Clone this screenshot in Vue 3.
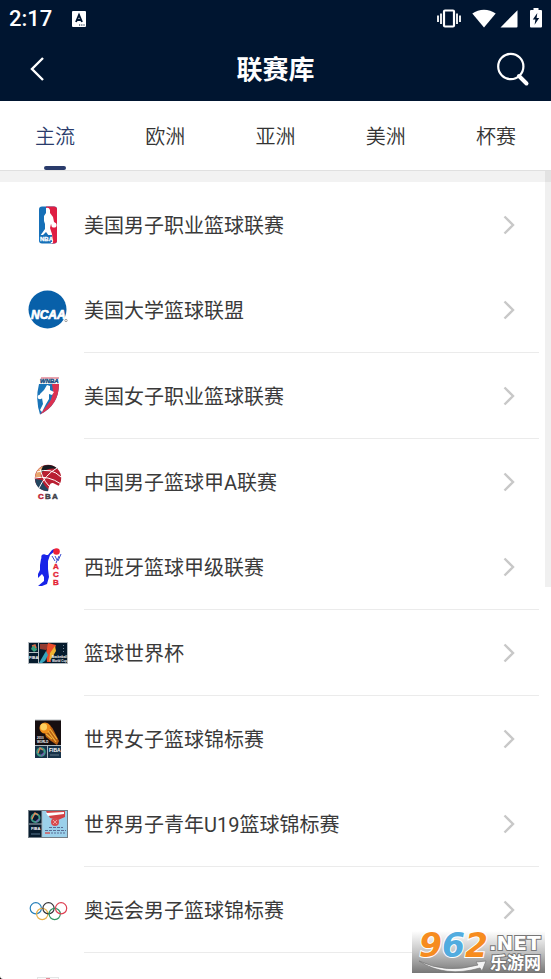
<script setup>
import { ref } from "vue";

const tabs = ["主流", "欧洲", "亚洲", "美洲", "杯赛"];
const activeTab = ref("主流");

// Leagues are shown in groups, the divider is left out at the end of some rows
const leagues = [
  { id: "nba", name: "美国男子职业篮球联赛", divider: false },
  { id: "ncaa", name: "美国大学篮球联盟", divider: true },
  { id: "wnba", name: "美国女子职业篮球联赛", divider: true },
  { id: "cba", name: "中国男子篮球甲A联赛", divider: false },
  { id: "acb", name: "西班牙篮球甲级联赛", divider: true },
  { id: "worldcup", name: "篮球世界杯", divider: true },
  { id: "women", name: "世界女子篮球锦标赛", divider: false },
  { id: "u19", name: "世界男子青年U19篮球锦标赛", divider: true },
  { id: "olympic", name: "奥运会男子篮球锦标赛", divider: true },
  { id: "next", name: "", divider: false },
];
</script>

<template>
  <div class="page">
    <header class="header">
      <div class="status-bar">
        <span class="time">2:17</span>
        <svg class="input-icon" width="14" height="16" viewBox="0 0 14 16">
          <rect width="14" height="16" rx="1" fill="#fff" />
          <path d="M4 11 L7 4 L10 11 M5 9 H9" fill="none" stroke="#001530" stroke-width="1.9" />
          <path d="M7 14 H8.2 M9.2 14 H10.4 M11.4 14 H12.6" stroke="#001530" stroke-width="1.2" />
        </svg>
        <div class="status-icons">
          <svg width="26" height="20" viewBox="0 0 26 20">
            <rect x="8" y="1.5" width="10" height="16" rx="1" fill="none" stroke="#fff" stroke-width="2.2" />
            <path d="M5 4.5 V15 M21 4.5 V15" stroke="#fff" stroke-width="1.8" />
            <path d="M2 6.5 V13 M24 6.5 V13" stroke="#fff" stroke-width="1.8" />
          </svg>
          <svg class="wifi" width="24" height="20" viewBox="0 0 24 20">
            <path d="M12 18.5 L0.3 4.6 C7 -0.7 17 -0.7 23.7 4.6 Z" fill="#fff" />
          </svg>
          <svg class="signal" width="18" height="20" viewBox="0 0 18 20">
            <path d="M0.5 18.5 L17.5 1.2 V17.5 Q17.5 18.5 16.5 18.5 Z" fill="#fff" />
          </svg>
          <svg class="battery" width="12" height="20" viewBox="0 0 12 20">
            <path d="M3.5 0 H8.5 V2 H11 Q12 2 12 3 V18.5 Q12 19.5 11 19.5 H1 Q0 19.5 0 18.5 V3 Q0 2 1 2 H3.5 Z" fill="#fff" />
            <path d="M7.3 5 L2.8 11.6 H5.4 L4.6 16.8 L9.2 10 H6.6 Z" fill="#001530" />
          </svg>
        </div>
      </div>
      <div class="nav-bar">
        <button type="button" class="nav-button" aria-label="返回">
          <svg width="16" height="26" viewBox="0 0 16 26">
            <path d="M14 2 L3 13 L14 24" fill="none" stroke="#fff" stroke-width="2.4" />
          </svg>
        </button>
        <h1 class="title">联赛库</h1>
        <button type="button" class="nav-button" aria-label="搜索">
          <svg width="34" height="36" viewBox="0 0 34 36">
            <circle cx="13.8" cy="15.5" r="12.6" fill="none" stroke="#fff" stroke-width="2.2" />
            <path d="M22 25 L29.5 32.5" stroke="#fff" stroke-width="4" stroke-linecap="round" />
          </svg>
        </button>
      </div>
    </header>

    <nav class="tabs">
      <button
        v-for="tab in tabs"
        :key="tab"
        type="button"
        class="tab"
        :class="{ active: tab === activeTab }"
        @click="activeTab = tab"
      >
        {{ tab }}
      </button>
    </nav>

    <main class="list">
      <a v-for="league in leagues" :key="league.id" href="#" class="league">
        <span class="logo">
          <svg v-if="league.id === 'nba'" width="40" height="40" viewBox="0 0 40 40">
            <rect x="11" y="1.5" width="18" height="37" rx="3" fill="#1670b8" />
            <path d="M18 1.5 H26 Q29 1.5 29 4.5 V35.5 Q29 38.5 26 38.5 H24 Z" fill="#df1e43" />
            <path d="M18 3 Q21 2 22 5 L22 8 L25 12 L26 17 L28 19 L26 22 L23 19 L22 23 L24 29 L25 38 L23 38 L21 31 L18 27 L14 31 L12 33 L12 31 L17 24 L17 19 L16 16 L16 11 L18 8 Z" fill="#fff" />
            <circle cx="26" cy="20" r="2.6" fill="#fff" />
            <path d="M12 30 H24 V37 H12 Z" fill="#1670b8" />
            <text x="12" y="36" class="mark" font-size="6" fill="#fff" stroke="#fff" stroke-width="0.3">NBA</text>
          </svg>
          <svg v-else-if="league.id === 'ncaa'" width="40" height="40" viewBox="0 0 40 40">
            <circle cx="19.5" cy="19.5" r="19" fill="#0860a9" />
            <text x="3" y="28.5" class="mark italic" font-size="12" fill="#fff" stroke="#fff" stroke-width="0.7">NCAA</text>
            <circle cx="38" cy="30.5" r="1.2" fill="none" stroke="#666" stroke-width="0.6" />
          </svg>
          <svg v-else-if="league.id === 'wnba'" width="40" height="40" viewBox="0 0 40 40">
            <path d="M13 2 H31" stroke="#d84a60" stroke-width="1" />
            <text x="12" y="7" class="mark italic" font-size="6" fill="#174d80" stroke="#174d80" stroke-width="0.4">WNBA</text>
            <path d="M11 8 H31 Q31 29 12 38.5 Q7 23 11 8 Z" fill="#1974b8" />
            <path d="M24 8 H31 Q31 29 12 38.5 L20 28 Q27 20 24 8 Z" fill="#dc3150" />
            <path d="M19 9 L22 10 L22 14 L26 16 L24 19 L21 18 L21 23 L18 28 L14 36 L12 34 L15 28 L14 22 L11 22 L12 18 L16 14 Z" fill="#fff" />
            <circle cx="12" cy="21" r="2.3" fill="#fff" />
          </svg>
          <svg v-else-if="league.id === 'cba'" width="40" height="40" viewBox="0 0 40 40">
            <circle cx="20" cy="16" r="13.2" fill="#b91f32" />
            <path d="M13 5 Q22 0 30 7 Q20 5 13 11 Z" fill="#171b21" />
            <path d="M7 15 Q8 7 15 4 Q12 10 13 16 Z" fill="#e8a66e" />
            <path d="M7 17 L14 18 Q16 25 23 29 Q8 30 7 17 Z" fill="#244660" />
            <path d="M7 16 Q20 13 33 22 M12 7 Q16 22 26 28 M9 10 Q23 5 33 15 M29 6 Q17 13 11 26" fill="none" stroke="#fff" stroke-width="1" />
            <path d="M20 30 Q21 20 25 21 L33 25 L29 31 Z" fill="#fff" />
            <g class="mark" font-size="8" stroke-width="0.5">
              <text x="10" y="37" fill="#bd2536" stroke="#bd2536">C</text>
              <text x="17" y="37" fill="#41434a" stroke="#41434a">B</text>
              <text x="24" y="37" fill="#41434a" stroke="#41434a">A</text>
            </g>
          </svg>
          <svg v-else-if="league.id === 'acb'" width="40" height="40" viewBox="0 0 40 40">
            <path d="M24 3 L26 2 L27 4 L22 8 L20 14 L20 22 L21 30 L19 37 L14 39 L10 39 L16 34 L16 30 L14 27 L10 31 L10 27 L12 23 L12 18 L13 12 L16 8 L20 8 Z" fill="#1824e8" />
            <circle cx="16" cy="10" r="2.7" fill="#1824e8" />
            <circle cx="28.5" cy="4.5" r="3.3" fill="#ee2338" />
            <path d="M24 9 L27 14 M27 9 L29 13 M31 9 L28 16 M33 7 L30 14" stroke="#384cce" stroke-width="1" />
            <g class="mark" font-size="8" fill="#e42334" stroke="#e42334" stroke-width="0.4">
              <text x="25" y="22">A</text>
              <text x="25" y="30">C</text>
              <text x="25" y="38">B</text>
            </g>
          </svg>
          <svg v-else-if="league.id === 'worldcup'" width="40" height="40" viewBox="0 0 40 40">
            <rect x="0.5" y="9.5" width="39" height="21" fill="#061b2d" stroke="#b5bbc0" />
            <path d="M10.5 10 V30 M1 19.5 H10" stroke="#b5bbc0" stroke-width="1" />
            <path d="M3 16 L5 12 L8 13 L9 17 L6 19 Z" fill="#399f7c" />
            <path d="M4 13 L7 12 L8 15" fill="none" stroke="#d46a46" stroke-width="1.4" />
            <text x="1" y="26" class="mark" font-size="4" fill="#fff">FIBA</text>
            <path d="M12 11 H22 L18 17 L12 16 Z" fill="#933a31" />
            <path d="M20 10 L28 12 L26 18 L22 20 L23 29 L19 29 L18 20 Z" fill="#e94b2b" />
            <path d="M27 13 L28 18 L25 23 L21 29 L22 20 Z" fill="#efb331" />
            <path d="M18 18 L20 22 L17 28 L14 30 L11 30 Z" fill="#36a4bd" />
            <text x="24" y="25" class="mark" font-size="3" fill="#fff">Basketball</text>
            <text x="24" y="29" class="mark" font-size="3" fill="#fff">World Cup</text>
            <path d="M35.5 12 V21" stroke="#789" stroke-width="1" stroke-dasharray="1 2" />
          </svg>
          <svg v-else-if="league.id === 'women'" width="40" height="40" viewBox="0 0 40 40">
            <rect x="7" y="1" width="26" height="38" fill="#160e10" />
            <path d="M7 1 H33" stroke="#b6bcc0" stroke-width="1" />
            <path d="M14 5 Q21 2 26 12 L31 22 L29 26 L23 22 L18 18 Z" fill="#b85e13" />
            <circle cx="17" cy="9" r="5.5" fill="#ef8c19" />
            <circle cx="15.7" cy="8" r="3.4" fill="#ffd05d" />
            <path d="M20 12 L28 23 M18 15 L24 20 M22 10 L29 20" stroke="#f2b339" stroke-width="1.2" />
            <text x="9" y="20" class="mark" font-size="3" fill="#fff">2010</text>
            <text x="9" y="24" class="mark" font-size="3" fill="#fff">WORLD</text>
            <rect x="7" y="26" width="12" height="13" fill="#173249" />
            <rect x="20" y="26" width="13" height="13" fill="#173249" />
            <path d="M7 26.5 H33 M19.5 26 V39" stroke="#aeb8be" stroke-width="1" />
            <circle cx="13" cy="33" r="3.7" fill="none" stroke="#3d9b87" stroke-width="2.2" />
            <path d="M10 34 L12 29 L15 31" fill="none" stroke="#e28355" stroke-width="1.2" />
            <path d="M13 37 L16 34" stroke="#7659b0" stroke-width="1.5" />
            <text x="21" y="33" class="mark" font-size="5" fill="#fff">FIBA</text>
            <path d="M22 36 H31" stroke="#63798b" stroke-width="1" />
          </svg>
          <svg v-else-if="league.id === 'u19'" width="40" height="40" viewBox="0 0 40 40">
            <rect x="0.5" y="6.5" width="39" height="27" fill="#9bd0ea" stroke="#737e87" />
            <rect x="1" y="7" width="13" height="26" fill="#071c2e" />
            <path d="M1 20 H14 M14 7 V33" stroke="#a6b3bd" stroke-width="1" />
            <circle cx="7.5" cy="14" r="4" fill="none" stroke="#3e9a87" stroke-width="2" />
            <path d="M4 15 L7 9 L10 11" fill="none" stroke="#ed8a57" stroke-width="1.3" />
            <path d="M8 18 L11 15" stroke="#7b68b4" stroke-width="1.5" />
            <text x="3" y="26" class="mark" font-size="4" fill="#fff">FIBA</text>
            <path d="M3 30 H12" stroke="#57758c" stroke-width="1" />
            <path d="M18 7 H37 V13 L30 16 L22 14 Z" fill="#d34145" />
            <path d="M18 9 L36 8 V10 L20 12 Z" fill="#fff" />
            <circle cx="27" cy="18" r="4" fill="#d84a4e" />
            <path d="M25 16 L29 20 M29 16 L25 20" stroke="#f4b9b2" stroke-width="0.8" />
            <path d="M21 23.5 H35 M17 26.5 H38" stroke="#586c94" stroke-width="1.2" stroke-dasharray="3 1" />
            <path d="M17 29 H22" stroke="#cf6063" stroke-width="1.6" />
            <path d="M23 29 H37" stroke="#586c94" stroke-width="1.2" stroke-dasharray="2 1" />
          </svg>
          <svg v-else-if="league.id === 'olympic'" width="40" height="40" viewBox="0 0 40 40">
            <g fill="none" stroke-width="1.2">
              <circle cx="7.8" cy="18.3" r="5.6" stroke="#267fb9" />
              <circle cx="14.2" cy="24" r="5.6" stroke="#e8b14a" />
              <circle cx="20.5" cy="18.3" r="5.6" stroke="#36363b" />
              <circle cx="26.7" cy="24" r="5.6" stroke="#329563" />
              <circle cx="33.1" cy="18.3" r="5.6" stroke="#dd4052" />
            </g>
          </svg>
          <svg v-else width="40" height="40" viewBox="0 0 40 40">
            <rect x="9.5" y="1.5" width="21" height="37" fill="#fafbfb" stroke="#e3e5e5" />
            <path d="M18 3 H22" stroke="#e78b98" stroke-width="2" />
          </svg>
        </span>
        <span class="league-body" :class="{ divided: league.divider }">
          <span class="league-name">{{ league.name }}</span>
          <svg class="arrow" width="12" height="20" viewBox="0 0 12 20">
            <path d="M1.5 1.5 L10 10 L1.5 18.5" fill="none" stroke="#c8c8c8" stroke-width="2.4" />
          </svg>
        </span>
      </a>
    </main>

    <div class="scrollbar"></div>
    <svg class="corner" width="3" height="3" viewBox="0 0 3 3">
      <path d="M0 0 Q0 3 3 3 H0 Z" fill="#000" />
    </svg>

    <svg class="watermark" width="133" height="50" viewBox="0 0 133 50">
      <defs>
        <linearGradient id="shade" x1="0" y1="0" x2="0" y2="1">
          <stop offset="0" stop-color="#fff" />
          <stop offset="0.5" stop-color="#c4c4c4" />
          <stop offset="1" stop-color="#777" />
        </linearGradient>
      </defs>
      <rect y="8" width="133" height="42" fill="url(#shade)" />
      <path d="M7 38 Q34 51 66 42 L64 39 L74 38 L70 48 L68 45 Q33 55 7 38 Z" fill="#f4f4f4" stroke="#777" stroke-width="0.7" />
      <text x="7" y="34" class="digits" font-size="33">
        <tspan fill="#f68c1f">9</tspan><tspan fill="#52acdf">6</tspan><tspan fill="#f68c1f">2</tspan>
      </text>
      <g fill="#fff" stroke="#777" stroke-width="2" paint-order="stroke">
        <text x="77" y="27" class="domain" font-size="20">.NET</text>
        <text x="78" y="46" class="site-name" font-size="17">乐游网</text>
      </g>
    </svg>
  </div>
</template>

<style>
body {
  margin: 0;
}
</style>

<style scoped>
.page {
  position: relative;
  display: flex;
  flex-direction: column;
  height: 100vh;
  overflow: hidden;
  background: #fff;
  color: #333;
  font-family: Roboto, "Noto Sans CJK SC", sans-serif;
}

button {
  padding: 0;
  border: 0;
  background: none;
  font-family: inherit;
  cursor: pointer;
}

svg {
  display: block;
  flex-shrink: 0;
}

.header {
  flex-shrink: 0;
  background: #001530;
  color: #fff;
}

.status-bar {
  display: flex;
  align-items: center;
  height: 37px;
  padding: 0 9px;
}

.time {
  font-size: 22px;
  font-weight: 500;
  line-height: 37px;
}

.input-icon {
  margin-left: 20px;
}

.status-icons {
  display: flex;
  align-items: center;
  margin-left: auto;
}

.wifi {
  margin-left: 10px;
}

.signal {
  margin-left: 4px;
}

.battery {
  margin: 0 0 2px 12px;
}

.nav-bar {
  display: flex;
  align-items: center;
  justify-content: space-between;
  height: 64px;
  padding: 0 20px;
}

.nav-button {
  display: flex;
  align-items: center;
  justify-content: center;
  width: 34px;
  height: 44px;
}

.title {
  margin: 0;
  padding-top: 2px;
  font-size: 26px;
  font-weight: 700;
  line-height: 62px;
}

.tabs {
  display: flex;
  flex-shrink: 0;
  height: 69px;
  border-bottom: 1px solid #e0e0e0;
}

.tab {
  position: relative;
  flex: 1;
  color: #333;
  font-size: 20px;
  font-weight: 350;
}

.tab.active {
  color: #2a3b6b;
}

.tab.active::after {
  content: "";
  position: absolute;
  bottom: 0;
  left: 50%;
  width: 22px;
  height: 4px;
  margin-left: -11px;
  border-radius: 2px;
  background: #2a3b6b;
}

.list {
  flex: 1;
  min-height: 0;
  overflow: hidden;
  border-top: 11px solid #f2f2f2;
}

.league {
  display: flex;
  padding: 0 12px 0 28px;
  color: #3a3a3a;
  text-decoration: none;
}

.logo {
  display: flex;
  align-items: center;
  width: 56px;
  height: 85px;
}

.league-body {
  display: flex;
  flex: 1;
  align-items: center;
  justify-content: space-between;
  height: 85px;
  padding-right: 24px;
}

.league-body.divided {
  border-bottom: 1px solid #ebebeb;
}

.league-name {
  padding-top: 3px;
  font-size: 20px;
  line-height: 30px;
}

.mark {
  font-family: "Liberation Sans", sans-serif;
  font-weight: 700;
}

.italic {
  font-style: italic;
}

.digits,
.domain {
  font-family: "DejaVu Sans", sans-serif;
  font-weight: 700;
}

.digits {
  font-style: italic;
  stroke: #fff;
  stroke-width: 2;
  paint-order: stroke;
}

.site-name {
  font-family: "Noto Sans CJK SC", sans-serif;
  font-weight: 700;
}

.scrollbar {
  position: absolute;
  top: 171px;
  right: 0;
  width: 6px;
  height: 416px;
  background: rgba(0, 0, 0, 0.06);
}

.corner {
  position: absolute;
  bottom: 0;
  left: 0;
}

.watermark {
  position: absolute;
  right: 6px;
  bottom: 6px;
}
</style>
